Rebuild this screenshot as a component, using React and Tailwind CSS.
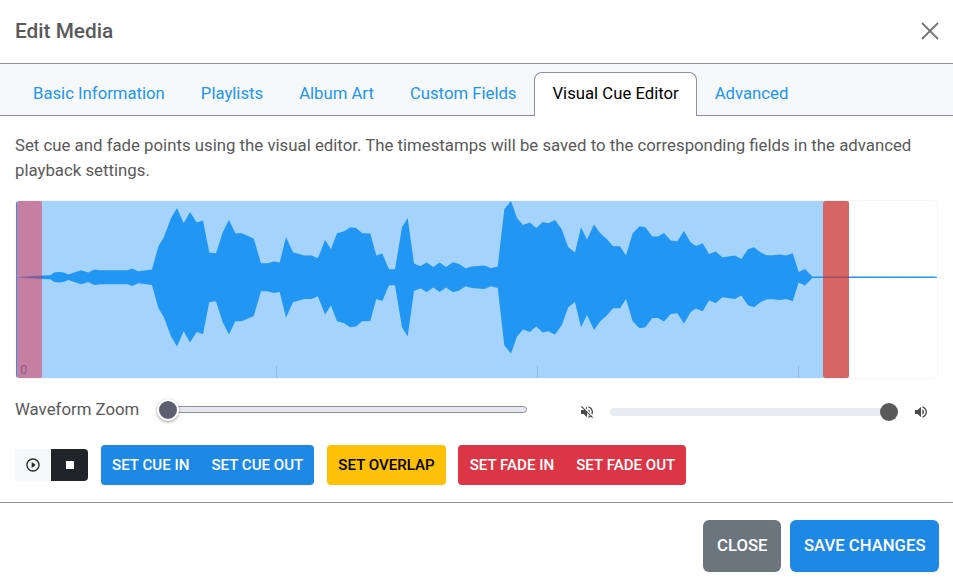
import React from 'react';
import { MdPlayCircleOutline, MdStop, MdVolumeOff, MdVolumeUp } from 'react-icons/md';

const tabs = ['Basic Information', 'Playlists', 'Album Art', 'Custom Fields', 'Visual Cue Editor', 'Advanced'];

// Upper edge of the waveform, read off the picture as [x, y] in 3x crop coords
const section1 = [[50,261],[95,258],[125,257],[148,256],[160,248],[175,246],[188,248],[202,254],[240,241],[262,248],[280,239],[300,241],[380,241],[393,236],[412,244],[453,239],[472,170],[488,143],[510,85],[528,54],[548,100],[567,66],[587,98],[606,92],[625,188],[645,190],[665,127],[684,90],[703,130],[722,130],[758,146],[780,220],[800,220],[818,215],[836,218],[855,141],[876,187],[910,197],[932,197],[950,205]];
const section2 = [[0,182],[12,150],[30,177],[48,130],[68,125],[88,112],[105,114],[124,130],[148,131],[166,197],[184,191],[204,238],[222,238],[243,112],[260,84],[279,221],[298,229],[317,218],[337,231],[356,218],[375,231],[396,217],[414,222],[434,235],[452,230],[490,227],[510,235],[530,230],[550,58],[570,33],[588,84],[606,105],[626,98],[646,114],[665,96],[682,100],[702,90],[722,118],[742,172],[762,188],[780,112],[798,149],[819,104],[838,130],[858,148],[876,169],[897,169],[915,197],[935,130],[955,110]];
const section3 = [[15,109],[34,112],[55,140],[72,140],[90,129],[110,152],[130,154],[150,123],[170,158],[186,168],[206,160],[225,192],[245,185],[265,202],[303,197],[322,207],[342,178],[360,172],[380,188],[398,196],[418,196],[438,194],[457,197],[476,190],[494,246],[513,237],[535,259.5],[900,259.5],[915,261]];

const toPoints = (list, offset) => list.map(([x, y]) => [offset + x / 3 - 15, (y - 262) / 3]);
const upper = [...toPoints(section1, 0), ...toPoints(section2, 320), ...toPoints(section3, 633)];
const wavePath = [
  ...upper.map(([x, y]) => `${x.toFixed(1)},${(76.3 + y).toFixed(1)}`),
  ...upper.slice().reverse().map(([x, y]) => `${x.toFixed(1)},${(76.3 - y).toFixed(1)}`),
].join(' ');

function Waveform() {
  return (
    <div className="relative h-[179px] rounded-[4px] border border-[#f6f6f6] overflow-hidden">
      <div className="h-full w-[807px] bg-[#a5d3fb]" />
      <svg className="absolute left-0 top-0" width="924" height="177" viewBox="0 0 924 177">
        <polygon points={wavePath} fill="#2196f3" />
        <rect x="0" y="0" width="1" height="177" fill="#3f8fdc" />
        <rect x="260" y="165" width="1" height="12" fill="#8db9e3" />
        <rect x="521" y="165" width="1" height="12" fill="#8db9e3" />
        <rect x="782" y="165" width="1" height="12" fill="#8db9e3" />
      </svg>
      <div className="absolute left-[1px] top-0 h-full w-[25px] rounded-[2px] bg-[rgba(227,43,75,0.5)]" />
      <div className="absolute left-[807px] top-0 h-full w-[26px] rounded-[2px] bg-[rgba(200,50,50,0.75)]" />
      <span className="absolute left-[4px] bottom-[1px] text-[13px] leading-[14px] text-[#8f5a85]">0</span>
    </div>
  );
}

function ControlsRow() {
  return (
    <div className="flex items-center h-[24px] mt-[18px]">
      <span className="text-[16.8px] leading-[24px] text-[#595959] w-[142px]">Waveform Zoom</span>
      <div className="relative w-[370px] h-[20px] flex items-center pl-[11px]">
        <div className="w-full h-[7px] rounded-full border border-[#8e8ea0] bg-[#e6e6ee]" />
        <div className="absolute left-0 top-0 w-[22px] h-[22px] rounded-full border-2 border-white bg-[#5f5e70] shadow-[0_1px_3px_rgba(0,0,0,0.4)]" />
      </div>
      <div className="flex items-center ml-[52px] mt-[5px]">
        <MdVolumeOff size={16} className="text-[#4a4a4a]" />
        <div className="relative ml-[15px] w-[288px] h-[8px] rounded-full bg-[#e9ecef]">
          <div className="absolute right-0 top-[-5px] w-[18px] h-[18px] rounded-full bg-[#595959]" />
        </div>
        <MdVolumeUp size={16} className="text-[#4a4a4a] ml-[15px]" />
      </div>
    </div>
  );
}

function ActionButton({ children, className = '' }) {
  return (
    <button className={`h-[40px] px-[11px] text-[15.1px] font-medium uppercase ${className}`}>{children}</button>
  );
}

export default function App() {
  return (
    <div className="w-[953px] h-[586px] overflow-hidden bg-white font-['Roboto',sans-serif]">
      {/* Header */}
      <div className="h-[64px] flex items-center justify-between pl-[15px] pr-[14px] pb-[2px] border-b border-[#8f909c]">
        <h5 className="text-[20.8px] font-medium text-[#595959] leading-[24px]">Edit Media</h5>
        <svg width="18" height="18" viewBox="0 0 18 18" className="mt-[1px]">
          <path d="M1 1 L17 17 M17 1 L1 17" stroke="#757575" strokeWidth="1.8" fill="none" />
        </svg>
      </div>

      {/* Tabs */}
      <div className="h-[52px] bg-[#f6f8fa] border-b border-[#8f909c] flex items-end pl-[15px]">
        {tabs.map((tab) => (
          <div
            key={tab}
            className={
              tab === 'Visual Cue Editor'
                ? 'h-[44px] -mb-px pb-[1px] px-[17px] flex items-center bg-white text-black text-[16.72px] rounded-t-[8px] border border-b-0 border-[#8f909c]'
                : 'h-[44px] -mb-px px-[18px] flex items-center text-[#2196f3] text-[16.72px]'
            }
          >
            {tab}
          </div>
        ))}
      </div>

      {/* Body */}
      <div className="h-[387px] px-[15px] pt-[17px] border-b border-[#8f909c]">
        <p className="text-[16.8px] leading-[25px] text-[#595959] mb-[17px]">
          Set cue and fade points using the visual editor. The timestamps will be saved to the corresponding fields in the advanced playback settings.
        </p>
        <Waveform />
        <ControlsRow />
        <div className="flex items-center gap-[13px] mt-[24px]">
          <div className="flex h-[32px] rounded-[4px] overflow-hidden">
            <div className="w-[36px] bg-[#f6f8fa] flex items-center justify-center text-[#212529]">
              <MdPlayCircleOutline size={16} />
            </div>
            <div className="w-[37px] bg-[#212529] flex items-center justify-center text-white">
              <MdStop size={16} />
            </div>
          </div>
          <div className="flex rounded-[4px] overflow-hidden bg-[#1e88e5] text-white">
            <ActionButton>Set Cue In</ActionButton>
            <ActionButton>Set Cue Out</ActionButton>
          </div>
          <ActionButton className="rounded-[4px] bg-[#ffc107] text-black">Set Overlap</ActionButton>
          <div className="flex -ml-px rounded-[4px] overflow-hidden bg-[#dc3545] text-white">
            <ActionButton className="pl-[12px]">Set Fade In</ActionButton>
            <ActionButton>Set Fade Out</ActionButton>
          </div>
        </div>
      </div>

      {/* Footer */}
      <div className="flex justify-end gap-[9px] pr-[14px] pt-[17px]">
        <button className="h-[52px] px-[14px] rounded-[6px] bg-[#6c757d] text-white text-[16.7px] font-medium uppercase">Close</button>
        <button className="h-[52px] px-[13.5px] rounded-[6px] bg-[#1e88e5] text-white text-[16.7px] font-medium uppercase">Save Changes</button>
      </div>
    </div>
  );
}
